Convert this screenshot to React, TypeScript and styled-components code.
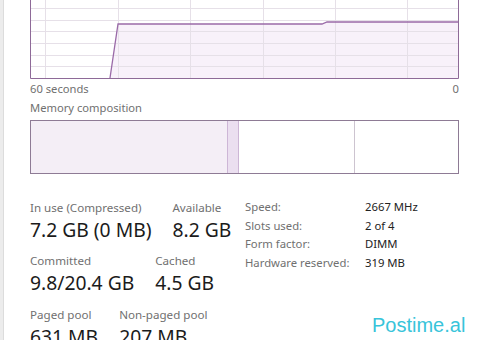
import React from "react";
import styled, { createGlobalStyle } from "styled-components";

const Global = createGlobalStyle`
  html, body { margin: 0; padding: 0; background: #ffffff; }
  body { font-family: "Noto Sans", "Open Sans", sans-serif; }
`;

const Page = styled.div`
  position: relative;
  display: flex;
  width: 480px;
  height: 340px;
  overflow: hidden;
  background: #ffffff;
`;

const SideStrip = styled.div`
  width: 3px;
  flex: none;
  background: #ececec;
  border-right: 1px solid #dcdcdc;
`;

const Content = styled.div`
  margin-left: 26px;
  width: 429px;
  display: flex;
  flex-direction: column;
  & > * { flex-shrink: 0; }
`;

const ChartBox = styled.div`
  height: 79px;
  line-height: 0;
`;

const AxisRow = styled.div`
  display: flex;
  justify-content: space-between;
  margin-top: 3px;
  font-size: 11.2px;
  line-height: 14px;
  color: #707070;
`;

const SectionLabel = styled.div`
  margin-top: 5px;
  font-size: 11.2px;
  line-height: 14px;
  color: #707070;
`;

const CompositionBar = styled.div`
  margin-top: 5px;
  height: 52px;
  border: 1px solid #8e7b95;
  display: flex;
`;

const Segment = styled.div<{ $w: number; $bg: string; $edge?: string }>`
  width: ${(p) => p.$w}px;
  flex: none;
  background: ${(p) => p.$bg};
  border-left: ${(p) => (p.$edge ? `1px solid ${p.$edge}` : "none")};
`;

const FreeSegment = styled.div`
  flex: 1;
  background: #ffffff;
  border-left: 1px solid #cdc4d0;
`;

const StatsArea = styled.div`
  margin-top: 26px;
  display: flex;
`;

const LeftStats = styled.div`
  width: 215px;
  display: flex;
  flex-direction: column;
`;

const StatRow = styled.div`
  display: flex;
  gap: 21px;
  height: 53.4px;
`;

const Stat = styled.div`
  display: flex;
  flex-direction: column;
`;

const StatLabel = styled.div`
  font-size: 11.6px;
  line-height: 15px;
  color: #707070;
  white-space: nowrap;
`;

const StatValue = styled.div`
  font-size: 19.3px;
  line-height: 29px;
  color: #1b1b1b;
  white-space: nowrap;
`;

const Details = styled.div`
  display: grid;
  grid-template-columns: 120px auto;
  grid-auto-rows: 18.6px;
  align-content: start;
  margin-top: -2px;
  font-size: 11.3px;
  line-height: 18.6px;
`;

const DetailKey = styled.div`
  color: #707070;
  white-space: nowrap;
`;

const DetailVal = styled.div`
  color: #222222;
  white-space: nowrap;
`;

const Watermark = styled.div`
  position: absolute;
  left: 372px;
  top: 313px;
  font-family: "Liberation Sans", Arial, sans-serif;
  font-size: 20px;
  line-height: 24px;
  color: #38c4da;
`;

const MemoryChart: React.FC = () => {
  const hs = [8.5, 20.5, 31.5, 43.5, 55.5, 66.5];
  const vs = [15.5, 88.5, 160.5, 233.5, 305.5, 377.5];
  const pts = "80,78 88,24 292,24 297,22 428.5,22";
  return (
    <svg width="429" height="79" viewBox="0 0 429 79">
      <polygon points={`${pts} 428.5,78 80,78`} fill="#f8f1fa" />
      {hs.map((y) => (
        <line key={y} x1="0" x2="429" y1={y} y2={y} stroke="#e6e0e8" strokeWidth="1" />
      ))}
      {vs.map((x) => (
        <line key={x} x1={x} x2={x} y1="0" y2="79" stroke="#e6e0e8" strokeWidth="1" />
      ))}
      <polyline points={pts} fill="none" stroke="#9a6aa8" strokeWidth="1.3" />
      <path d="M0.5 0 V78.5 H428.5 V0" fill="none" stroke="#8e6a98" strokeWidth="1" />
    </svg>
  );
};

const stats = [
  [
    { label: "In use (Compressed)", value: "7.2 GB (0 MB)" },
    { label: "Available", value: "8.2 GB" },
  ],
  [
    { label: "Committed", value: "9.8/20.4 GB" },
    { label: "Cached", value: "4.5 GB" },
  ],
  [
    { label: "Paged pool", value: "631 MB" },
    { label: "Non-paged pool", value: "207 MB" },
  ],
];

const details = [
  ["Speed:", "2667 MHz"],
  ["Slots used:", "2 of 4"],
  ["Form factor:", "DIMM"],
  ["Hardware reserved:", "319 MB"],
];

export default function App() {
  return (
    <>
      <Global />
      <Page>
        <SideStrip />
        <Content>
          <ChartBox>
            <MemoryChart />
          </ChartBox>
          <AxisRow>
            <span>60 seconds</span>
            <span>0</span>
          </AxisRow>
          <SectionLabel>Memory composition</SectionLabel>
          <CompositionBar>
            <Segment $w={196} $bg="#f4eef6" />
            <Segment $w={10} $bg="#ebdff0" $edge="#cdb6d6" />
            <Segment $w={115} $bg="#ffffff" $edge="#cdb6d6" />
            <FreeSegment />
          </CompositionBar>
          <StatsArea>
            <LeftStats>
              {stats.map((row, i) => (
                <StatRow key={i}>
                  {row.map((s) => (
                    <Stat key={s.label}>
                      <StatLabel>{s.label}</StatLabel>
                      <StatValue>{s.value}</StatValue>
                    </Stat>
                  ))}
                </StatRow>
              ))}
            </LeftStats>
            <Details>
              {details.map(([k, v]) => (
                <React.Fragment key={k}>
                  <DetailKey>{k}</DetailKey>
                  <DetailVal>{v}</DetailVal>
                </React.Fragment>
              ))}
            </Details>
          </StatsArea>
        </Content>
        <Watermark>Postime.al</Watermark>
      </Page>
    </>
  );
}
